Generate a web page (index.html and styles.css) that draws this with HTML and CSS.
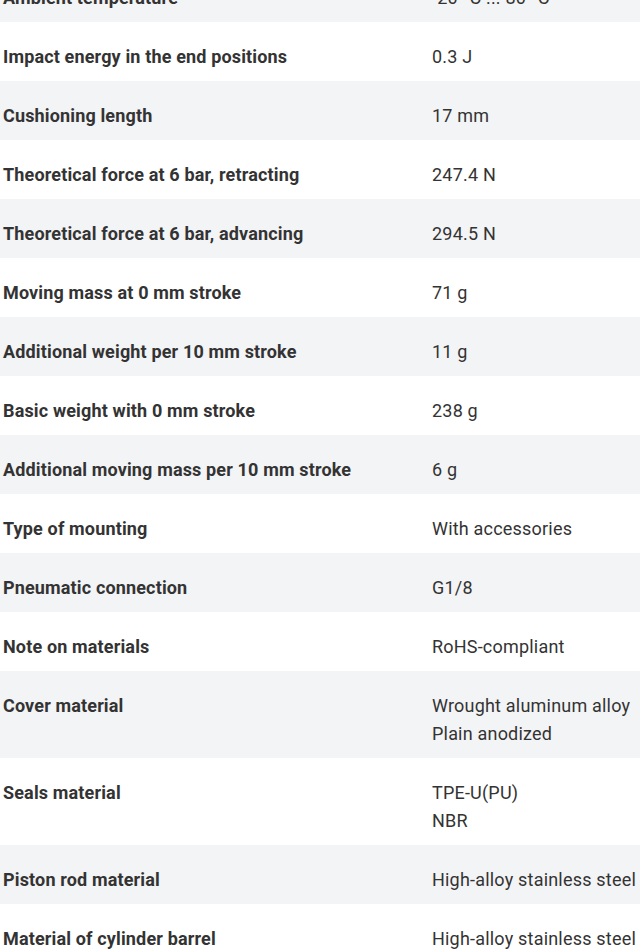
FILE: index.html
```html
<!DOCTYPE html>
<html lang="en">
<head>
<meta charset="utf-8">
<title>Technical data</title>
<link rel="stylesheet" href="styles.css">
</head>
<body>
<div class="specs">
  <div class="row alt"><div class="label">Ambient temperature</div><div class="value">-20 °C ... 80 °C</div></div>
  <div class="row"><div class="label">Impact energy in the end positions</div><div class="value">0.3 J</div></div>
  <div class="row alt"><div class="label">Cushioning length</div><div class="value">17 mm</div></div>
  <div class="row"><div class="label">Theoretical force at 6 bar, retracting</div><div class="value">247.4 N</div></div>
  <div class="row alt"><div class="label">Theoretical force at 6 bar, advancing</div><div class="value">294.5 N</div></div>
  <div class="row"><div class="label">Moving mass at 0 mm stroke</div><div class="value">71 g</div></div>
  <div class="row alt"><div class="label">Additional weight per 10 mm stroke</div><div class="value">11 g</div></div>
  <div class="row"><div class="label">Basic weight with 0 mm stroke</div><div class="value">238 g</div></div>
  <div class="row alt"><div class="label">Additional moving mass per 10 mm stroke</div><div class="value">6 g</div></div>
  <div class="row"><div class="label">Type of mounting</div><div class="value">With accessories</div></div>
  <div class="row alt"><div class="label">Pneumatic connection</div><div class="value">G1/8</div></div>
  <div class="row"><div class="label">Note on materials</div><div class="value">RoHS-compliant</div></div>
  <div class="row alt"><div class="label">Cover material</div><div class="value">Wrought aluminum alloy<br>Plain anodized</div></div>
  <div class="row"><div class="label">Seals material</div><div class="value">TPE-U(PU)<br>NBR</div></div>
  <div class="row alt"><div class="label">Piston rod material</div><div class="value">High-alloy stainless steel</div></div>
  <div class="row"><div class="label">Material of cylinder barrel</div><div class="value">High-alloy stainless steel</div></div>
</div>
</body>
</html>
```
FILE: styles.css
```css
html, body {
  margin: 0;
  padding: 0;
  background: #ffffff;
}
body {
  width: 640px;
  height: 952px;
  overflow: hidden;
  font-family: "Roboto", "Liberation Sans", sans-serif;
  color: #333333;
}
.specs {
  margin-top: -37px;
  display: flex;
  flex-direction: column;
}
.row {
  display: grid;
  grid-template-columns: 429px 1fr;
  padding: 21px 0 10px 3px;
  font-size: 18px;
  line-height: 28px;
  white-space: nowrap;
}
.row.alt {
  background: #f3f4f6;
}
.label {
  font-weight: 700;
  letter-spacing: 0.15px;
}
.value {
  font-weight: 400;
  letter-spacing: 0.2px;
}
```
